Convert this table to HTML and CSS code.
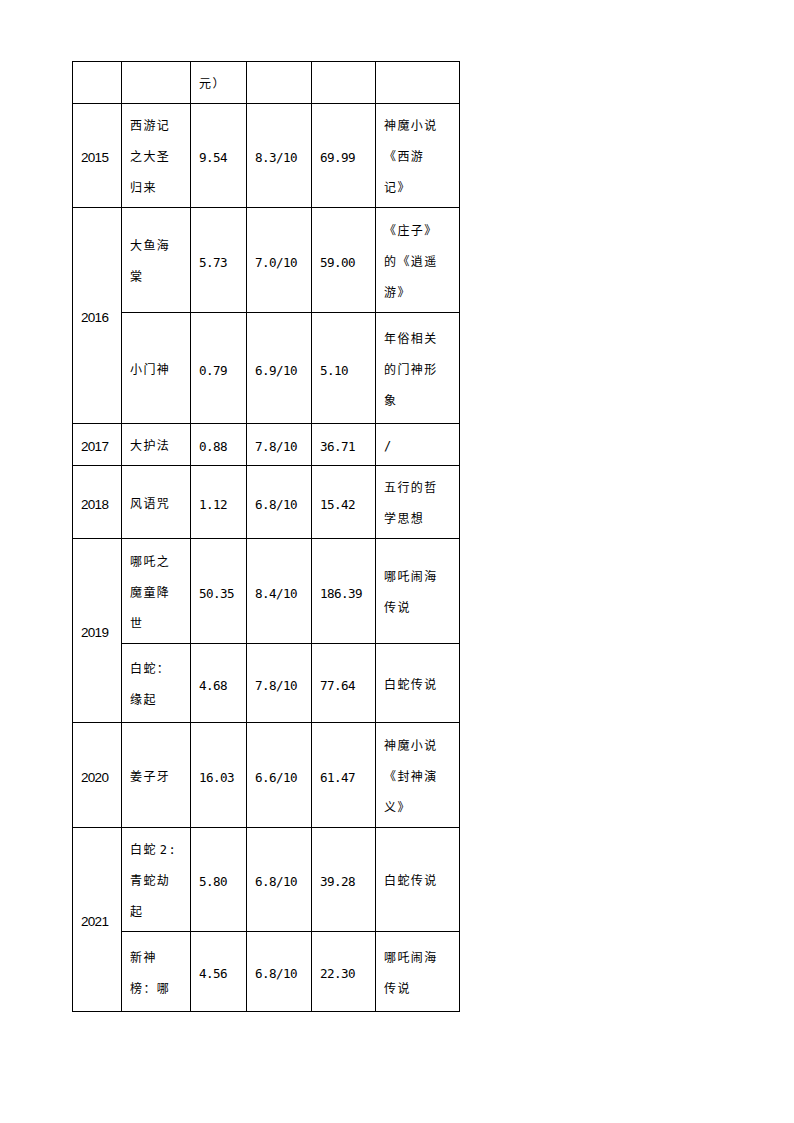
FILE: index.html
```html
<!DOCTYPE html>
<html lang="zh">
<head>
<meta charset="utf-8">
<link rel="stylesheet" href="styles.css">
</head>
<body>
<div class="page">
<table class="films">
<colgroup>
<col class="c1"><col class="c2"><col class="c3"><col class="c4"><col class="c5"><col class="c6">
</colgroup>
<tbody>
<tr class="h42">
<td></td><td></td><td class="cjk">元）</td><td></td><td></td><td></td>
</tr>
<tr class="h104">
<td class="yr">2015</td>
<td class="cjk">西游记<br>之大圣<br>归来</td>
<td class="num">9.54</td>
<td class="num">8.3/10</td>
<td class="num">69.99</td>
<td class="cjk">神魔小说<br>《西游<br>记》</td>
</tr>
<tr class="h105">
<td class="yr" rowspan="2">2016</td>
<td class="cjk">大鱼海<br>棠</td>
<td class="num">5.73</td>
<td class="num">7.0/10</td>
<td class="num">59.00</td>
<td class="cjk">《庄子》<br>的《逍遥<br>游》</td>
</tr>
<tr class="h111">
<td class="cjk">小门神</td>
<td class="num">0.79</td>
<td class="num">6.9/10</td>
<td class="num">5.10</td>
<td class="cjk">年俗相关<br>的门神形<br>象</td>
</tr>
<tr class="h42">
<td class="yr">2017</td>
<td class="cjk">大护法</td>
<td class="num">0.88</td>
<td class="num">7.8/10</td>
<td class="num">36.71</td>
<td class="cjk">/</td>
</tr>
<tr class="h73">
<td class="yr">2018</td>
<td class="cjk">风语咒</td>
<td class="num">1.12</td>
<td class="num">6.8/10</td>
<td class="num">15.42</td>
<td class="cjk">五行的哲<br>学思想</td>
</tr>
<tr class="h105">
<td class="yr" rowspan="2">2019</td>
<td class="cjk">哪吒之<br>魔童降<br>世</td>
<td class="num">50.35</td>
<td class="num">8.4/10</td>
<td class="num">186.39</td>
<td class="cjk">哪吒闹海<br>传说</td>
</tr>
<tr class="h79">
<td class="cjk">白蛇：<br>缘起</td>
<td class="num">4.68</td>
<td class="num">7.8/10</td>
<td class="num">77.64</td>
<td class="cjk">白蛇传说</td>
</tr>
<tr class="h105">
<td class="yr">2020</td>
<td class="cjk">姜子牙</td>
<td class="num">16.03</td>
<td class="num">6.6/10</td>
<td class="num">61.47</td>
<td class="cjk">神魔小说<br>《封神演<br>义》</td>
</tr>
<tr class="h104">
<td class="yr" rowspan="2">2021</td>
<td class="cjk">白蛇<span class="gap"></span>2:<br>青蛇劫<br>起</td>
<td class="num">5.80</td>
<td class="num">6.8/10</td>
<td class="num">39.28</td>
<td class="cjk">白蛇传说</td>
</tr>
<tr class="h80">
<td class="cjk">新神<br>榜：哪</td>
<td class="num">4.56</td>
<td class="num">6.8/10</td>
<td class="num">22.30</td>
<td class="cjk">哪吒闹海<br>传说</td>
</tr>
</tbody>
</table>
</div>
</body>
</html>
```

FILE: styles.css
```css
html, body {
  margin: 0;
  padding: 0;
  background: #fff;
}
.page {
  width: 794px;
  height: 1123px;
  padding: 61px 0 0 72px;
  box-sizing: border-box;
  overflow: hidden;
}
.films {
  border-collapse: collapse;
  table-layout: fixed;
  width: 387px;
  color: #000;
}
.c1 { width: 49px; }
.c2 { width: 69px; }
.c3 { width: 56px; }
.c4 { width: 65px; }
.c5 { width: 64px; }
.c6 { width: 84px; }
.films td {
  border: 1px solid #000;
  padding: 4px 4px 0 8px;
  vertical-align: middle;
  line-height: 31px;
  white-space: nowrap;
  overflow: hidden;
}
.yr {
  font-family: "Liberation Sans", Arial, sans-serif;
  font-size: 13.5px;
  letter-spacing: -0.7px;
  padding-left: 9px;
}
.num {
  font-family: "DejaVu Sans Mono", monospace;
  font-size: 12.6px;
  letter-spacing: -0.6px;
}
.cjk {
  font-family: "DejaVu Sans Mono", "Noto Sans CJK SC", monospace;
  font-size: 12px;
  letter-spacing: 1.4px;
}
.gap {
  display: inline-block;
  width: 3px;
}
.h42 { height: 42px; }
.h73 { height: 73px; }
.h79 { height: 79px; }
.h80 { height: 80px; }
.h104 { height: 104px; }
.h105 { height: 105px; }
.h111 { height: 111px; }
```
